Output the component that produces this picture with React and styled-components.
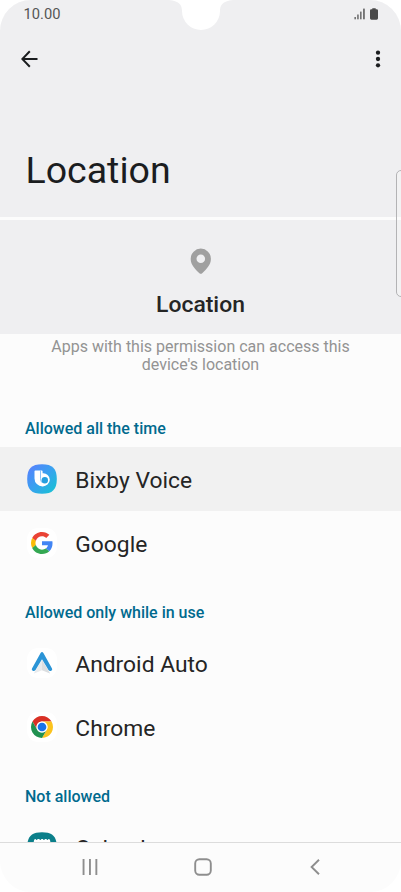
import React from 'react';
import styled, { createGlobalStyle } from 'styled-components';

const GlobalStyle = createGlobalStyle`
    * {
        box-sizing: border-box;
    }

    body {
        margin: 0;
        background: #ffffff;
        font-family: Roboto, sans-serif;
    }
`;

const BackIcon = () => (
    <svg width='18' height='18' viewBox='0 0 18 18' fill='none' stroke='#1b1d1f' strokeWidth='2'>
        <path d='M16.5 9H1.5M8.8 1.2L1.3 9l7.5 7.8' />
    </svg>
);

const MoreIcon = () => (
    <svg width='6' height='18' viewBox='0 0 6 18' fill='#1b1d1f'>
        <circle cx='3' cy='2.7' r='2.15' />
        <circle cx='3' cy='9' r='2.15' />
        <circle cx='3' cy='15.3' r='2.15' />
    </svg>
);

const SignalIcon = () => (
    <svg width='12' height='12' viewBox='0 0 12 12' fill='#555555'>
        <rect x='0.5' y='9' width='1.3' height='2.3' />
        <rect x='3.3' y='6.5' width='1.3' height='4.8' />
        <rect x='6.2' y='3.6' width='1.3' height='7.7' />
        <rect x='9.2' y='0.6' width='1.5' height='10.7' />
    </svg>
);

const BatteryIcon = () => (
    <svg width='8' height='12' viewBox='0 0 8 12' fill='#4a4a4a'>
        <path d='M2.3 0.3h3.4v1h1A1.3 1.3 0 0 1 8 2.6v7.7a1.4 1.4 0 0 1-1.4 1.4H1.4A1.4 1.4 0 0 1 0 10.3V2.6a1.3 1.3 0 0 1 1.3-1.3h1z' />
    </svg>
);

const PinIcon = () => (
    <svg width='22' height='26' viewBox='0 0 22 26'>
        <path
            fill='#a0a0a0'
            fillRule='evenodd'
            d='M10.8 0.6A10.1 10.1 0 0 0 .7 10.9c0 6.1 4.6 10.100 8.700 14.300q1.400 1.100 2.800 0c4.100-4.200 8.700-8.200 8.700-14.300A10.100 10.100 0 0 0 10.800.6zm0 5.800a4.300 4.300 0 1 1 0 8.600 4.300 4.300 0 0 1 0-8.600z'
        />
    </svg>
);

const BixbyIcon = () => (
    <svg width='30' height='30' viewBox='0 0 30 30'>
        <defs>
            <linearGradient id='bixby' x1='0' y1='0' x2='1' y2='1'>
                <stop offset='0' stopColor='#5c7cff' />
                <stop offset='0.5' stopColor='#38a2ef' />
                <stop offset='1' stopColor='#13c6d0' />
            </linearGradient>
        </defs>
        <path
            fill='url(#bixby)'
            d='M15 0.2C25.5.2 29.8 4.5 29.8 15S25.5 29.8 15 29.8.2 25.5.2 15 4.5.2 15 .2z'
        />
        <path
            fill='#fff'
            d='M8.2 6.6h6.600q.8 0 .8.8v1.900a6.500 6.500 0 0 1 7.200 6.500 7 7 0 0 1-7.300 6.600 8 8 0 0 1-8-8V7.300q0-.7.7-.7z'
        />
        <path fill='none' stroke='#5ba9f3' strokeWidth='0.7' d='M13.5 6.600v8q0 2.500 1.400 4' />
        <circle cx='17.800' cy='16.200' r='3.200' fill='#259fdf' />
    </svg>
);

const GoogleIcon = () => (
    <svg width='22' height='22' viewBox='0 0 48 48'>
        <path fill='#ea4335' d='M24 9.5c3.54 0 6.71 1.22 9.21 3.6l6.85-6.85C35.9 2.38 30.47 0 24 0 14.62 0 6.51 5.38 2.56 13.22l7.98 6.19C12.43 13.72 17.74 9.5 24 9.5z' />
        <path fill='#4285f4' d='M46.98 24.55c0-1.57-.15-3.09-.38-4.55H24v9.02h12.94c-.58 2.96-2.26 5.48-4.78 7.18l7.73 6c4.51-4.18 7.09-10.36 7.09-17.65z' />
        <path fill='#fbbc05' d='M10.53 28.59A14.5 14.5 0 0 1 9.77 24c0-1.6.27-3.14.76-4.59l-7.98-6.19A23.9 23.9 0 0 0 0 24c0 3.88.92 7.54 2.56 10.78z' />
        <path fill='#34a853' d='M24 48c6.48 0 11.93-2.13 15.89-5.81l-7.73-6c-2.15 1.45-4.92 2.3-8.16 2.3-6.26 0-11.57-4.22-13.47-9.91l-7.98 6.19C6.51 42.62 14.62 48 24 48z' />
    </svg>
);

const AutoIcon = () => (
    <svg width='22' height='24' viewBox='0 0 22 24'>
        <path fill='#e9ebed' d='M11 9L3.2 21.7q-.4.9.5.6L11 19.2z' />
        <path fill='#dcdee0' d='M11 9l7.8 12.7q.4.9-.5.6L11 19.2z' />
        <path fill='#2b94d6' d='M9.6 2.1q1.4-2.1 2.8 0L21 17.4q.8 1.6-.8 2.4-1.5.6-2.7-.7L11 8.2 4.5 19.1q-1.2 1.3-2.7.7-1.6-.8-.8-2.4z' />
    </svg>
);

const ChromeIcon = () => (
    <svg width='22' height='22' viewBox='0 0 48 48'>
        <circle cx='24' cy='24' r='24' fill='#fff' />
        <path fill='#d93025' d='M3.22 12A24 24 0 0 1 44.78 12H24a12 12 0 0 0-10.39 18z' />
        <path fill='#fcc31e' d='M44.78 12A24 24 0 0 1 24 48l10.39-18A12 12 0 0 0 24 12z' />
        <path fill='#219150' d='M24 48A24 24 0 0 1 3.22 12l10.39 18a12 12 0 0 0 20.78 0z' />
        <circle cx='24' cy='24' r='12' fill='#fff' />
        <circle cx='24' cy='24' r='9.5' fill='#1a73e8' />
    </svg>
);

const CalendarIcon = () => (
    <svg width='30' height='30' viewBox='0 0 30 30'>
        <path fill='#0b7f8a' d='M15 0.2C25.5.2 29.8 4.5 29.8 15S25.5 29.8 15 29.8.2 25.5.2 15 4.5.2 15 .2z' />
        <path fill='#fff' d='M6.8 9.2q0-2.2 1.9-2.2.9 2.2 2 0h1.5q1.2 2.2 2.2 0h1.4q1.2 2.2 2.2 0h1.4q1.1 2.2 2 0 1.900 0 1.900 2.200V23H6.800z' />
    </svg>
);

const sections = [
    {
        title: 'Allowed all the time',
        apps: [
            { name: 'Bixby Voice', icon: <BixbyIcon />, active: true },
            { name: 'Google', icon: <GoogleIcon />, tile: true },
        ],
    },
    {
        title: 'Allowed only while in use',
        apps: [
            { name: 'Android Auto', icon: <AutoIcon />, tile: true },
            { name: 'Chrome', icon: <ChromeIcon />, tile: true },
        ],
    },
    {
        title: 'Not allowed',
        apps: [{ name: 'Calendar', icon: <CalendarIcon /> }],
    },
];

const App = () => {
    return (
        <>
            <GlobalStyle />
            <Screen>
                <Notch viewBox='0 0 70 30'>
                    <path fill='#fff' d='M3 0h64C56 1 54 6 54 11A19 19 0 0 1 16 11C16 6 14 1 3 0z' />
                </Notch>
                <EdgeHandle />
                <Header>
                    <StatusBar>
                        <Time>10.00</Time>
                        <StatusIcons>
                            <SignalIcon />
                            <BatteryIcon />
                        </StatusIcons>
                    </StatusBar>
                    <Toolbar>
                        <IconButton aria-label='Back'>
                            <BackIcon />
                        </IconButton>
                        <IconButton aria-label='More options'>
                            <MoreIcon />
                        </IconButton>
                    </Toolbar>
                    <Title>Location</Title>
                </Header>
                <Permission>
                    <PinIcon />
                    <PermissionName>Location</PermissionName>
                </Permission>
                <Content>
                    <Description>
                        Apps with this permission can access this
                        <br />
                        device's location
                    </Description>
                    {sections.map((section) => (
                        <section key={section.title}>
                            <SectionTitle>{section.title}</SectionTitle>
                            {section.apps.map((app) => (
                                <AppRow key={app.name} $active={app.active}>
                                    <AppIcon $tile={app.tile}>{app.icon}</AppIcon>
                                    <AppName>{app.name}</AppName>
                                </AppRow>
                            ))}
                        </section>
                    ))}
                </Content>
                <NavBar>
                    <IconButton aria-label='Recents'>
                        <svg width='16' height='16' viewBox='0 0 16 16' fill='#8e8e8e'>
                            <rect x='0.6' width='1.9' height='16' />
                            <rect x='7' width='1.9' height='16' />
                            <rect x='13.4' width='1.9' height='16' />
                        </svg>
                    </IconButton>
                    <IconButton aria-label='Home'>
                        <svg width='18' height='18' viewBox='0 0 18 18' fill='none'>
                            <rect x='1.2' y='1.2' width='15.6' height='15.6' rx='4.2' stroke='#8e8e8e' strokeWidth='1.9' />
                        </svg>
                    </IconButton>
                    <IconButton aria-label='Back'>
                        <svg width='10' height='16' viewBox='0 0 10 16' fill='none'>
                            <path d='M9 .7L1.6 8 9 15.3' stroke='#8e8e8e' strokeWidth='1.9' />
                        </svg>
                    </IconButton>
                </NavBar>
            </Screen>
        </>
    );
};

const Screen = styled.div`
    position: relative;
    display: flex;
    flex-direction: column;
    width: 401px;
    height: 892px;
    overflow: hidden;
    border-radius: 31px;
    background: #fcfcfc;
`;

const Notch = styled.svg`
    position: absolute;
    top: 0;
    left: 165.5px;
    width: 70px;
    height: 30px;
`;

/* edge panel handle, hangs over the right border */
const EdgeHandle = styled.div`
    position: absolute;
    top: 170px;
    right: -6px;
    width: 11px;
    height: 127px;
    border: 1px solid #b3b3b5;
    border-radius: 5px;
    background: rgba(255, 255, 255, 0.2);
`;

const Header = styled.header`
    flex: none;
    height: 217px;
    background: #efeff1;
`;

const StatusBar = styled.div`
    display: flex;
    align-items: center;
    justify-content: space-between;
    height: 30px;
    padding: 0 23px 2px 23.5px;
`;

const Time = styled.span`
    color: #555555;
    font-size: 14.7px;
    line-height: 18px;
`;

const StatusIcons = styled.div`
    display: flex;
    gap: 4px;
`;

const Toolbar = styled.div`
    display: flex;
    align-items: center;
    justify-content: space-between;
    height: 58px;
    padding: 0 20px 0 21px;
`;

const IconButton = styled.button`
    display: flex;
    padding: 0;
    border: none;
    background: none;
    cursor: pointer;
`;

const Title = styled.h1`
    margin: 60px 0 0 25.5px;
    color: #1b1d1f;
    font-size: 37.5px;
    font-weight: 400;
    line-height: 44px;
`;

const Permission = styled.div`
    display: flex;
    flex: none;
    flex-direction: column;
    align-items: center;
    height: 114px;
    margin-top: 3px;
    padding-top: 28px;
    background: #efeff1;
`;

const PermissionName = styled.h2`
    margin: 17px 0 0;
    color: #252525;
    font-size: 22.9px;
    font-weight: 500;
    line-height: 28px;
`;

const Content = styled.main`
    flex: 1;
    min-height: 0;
    overflow: hidden;
`;

const Description = styled.p`
    height: 57px;
    margin: 0;
    padding-top: 4px;
    color: #939393;
    font-size: 16px;
    line-height: 18px;
    text-align: center;
`;

const SectionTitle = styled.h3`
    height: 56px;
    margin: 0;
    padding: 28px 25px 0;
    color: #006a8e;
    font-size: 16px;
    font-weight: 500;
    line-height: 20px;
`;

const AppRow = styled.div`
    display: flex;
    align-items: center;
    height: 64px;
    padding: 0 27px;
    background: ${({ $active }) => ($active ? '#f1f1f1' : 'transparent')};
`;

const AppIcon = styled.span`
    display: flex;
    align-items: center;
    justify-content: center;
    width: 30px;
    height: 30px;
    border-radius: 11px;
    background: ${({ $tile }) => ($tile ? '#ffffff' : 'transparent')};
`;

const AppName = styled.span`
    margin: 4px 0 0 18.3px;
    color: #252525;
    font-size: 22.8px;
    line-height: 28px;
`;

const NavBar = styled.nav`
    display: grid;
    flex: none;
    grid-template-columns: 112px 112px 1fr;
    align-items: center;
    height: 50px;
    padding: 0 0 2px 82px;
    border-top: 1px solid #dcdcdc;

    button:nth-child(2) {
        margin-left: -0.5px;
    }

    button:nth-child(3) {
        margin-left: 3.5px;
    }
`;

export default App;
